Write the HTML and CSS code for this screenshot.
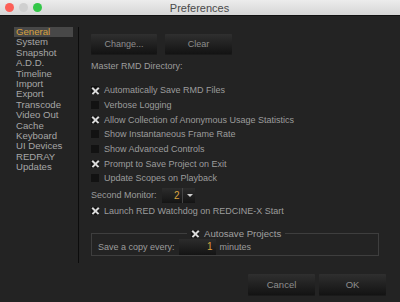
FILE: index.html
```html
<!DOCTYPE html>
<html lang="en">
<head>
  <meta charset="UTF-8" />
  <title>Preferences</title>
  <link rel="stylesheet" href="styles.css">
</head>
<body>
  <div class="titlebar">
    <div class="lights">
      <span class="light red"></span>
      <span class="light gray"></span>
      <span class="light green"></span>
    </div>
    <div class="title">Preferences</div>
  </div>

  <div class="window">
    <ul class="sidebar">
      <li class="active">General</li>
      <li>System</li>
      <li>Snapshot</li>
      <li>A.D.D.</li>
      <li>Timeline</li>
      <li>Import</li>
      <li>Export</li>
      <li>Transcode</li>
      <li>Video Out</li>
      <li>Cache</li>
      <li>Keyboard</li>
      <li>UI Devices</li>
      <li>REDRAY</li>
      <li>Updates</li>
    </ul>

    <div class="panel">
      <div class="btn-row">
        <button class="btn">Change...</button>
        <button class="btn">Clear</button>
      </div>
      <div class="label">Master RMD Directory:</div>

      <div class="checks">
        <div class="check on"><span class="box"></span>Automatically Save RMD Files</div>
        <div class="check"><span class="box"></span>Verbose Logging</div>
        <div class="check on"><span class="box"></span>Allow Collection of Anonymous Usage Statistics</div>
        <div class="check"><span class="box"></span>Show Instantaneous Frame Rate</div>
        <div class="check"><span class="box"></span>Show Advanced Controls</div>
        <div class="check on"><span class="box"></span>Prompt to Save Project on Exit</div>
        <div class="check"><span class="box"></span>Update Scopes on Playback</div>
      </div>

      <div class="monitor-row">
        <span>Second Monitor:</span>
        <div class="dropdown">
          <span class="value">2</span>
          <span class="arrow"></span>
        </div>
      </div>

      <div class="check on"><span class="box"></span>Launch RED Watchdog on REDCINE-X Start</div>

      <fieldset class="group">
        <legend class="check on"><span class="box"></span>Autosave Projects</legend>
        <div class="copy-row">
          <span>Save a copy every:</span>
          <div class="field">1</div>
          <span>minutes</span>
        </div>
      </fieldset>
    </div>
  </div>

  <div class="footer">
    <button class="btn big">Cancel</button>
    <button class="btn big">OK</button>
  </div>
</body>
</html>
```

FILE: styles.css
```css
body {
  margin: 0;
  width: 400px;
  height: 302px;
  overflow: hidden;
  background: #232323;
  font-family: "Liberation Sans", Arial, sans-serif;
  font-size: 9px;
  color: #9c9c9c;
}

/* Barra de titulo */
.titlebar {
  height: 16px;
  display: flex;
  align-items: center;
  position: relative;
  background: linear-gradient(#ececec, #d6d6d6);
  border-bottom: 1px solid #111;
  box-sizing: border-box;
}

.lights {
  display: flex;
  gap: 5px;
  padding-left: 5px;
}

.light {
  width: 9px;
  height: 9px;
  border-radius: 50%;
}

.red { background: #fc5f57; }
.gray { background: #cfcfcf; }
.green { background: #33c748; }

.title {
  flex: 1;
  text-align: center;
  margin-right: 43px;
  font-size: 11px;
  color: #4a4a4a;
}

.window {
  display: flex;
}

/* Lista lateral */
.sidebar {
  list-style: none;
  margin: 11px 0 0 14px;
  padding: 0 5px 0 0;
  width: 59px;
  height: 236px;
  border-right: 1px solid #0c0c0c;
  font-size: 9.6px;
  line-height: 10.4px;
}

.sidebar li {
  padding-left: 2px;
  color: #a6a6a6;
}

.sidebar li.active {
  background: #484848;
  color: #d9a23e;
}

.panel {
  padding: 18px 0 0 12px;
  flex: 1;
}

.btn-row {
  display: flex;
  gap: 8px;
}

.btn {
  font-family: "Liberation Sans", Arial, sans-serif;
  font-size: 9px;
  color: #8e8e8e;
  width: 66px;
  height: 20px;
  border: none;
  border-radius: 1px;
  background: linear-gradient(#2f2f2f, #131313);
  box-shadow: 0 1px 0 #1a1a1a;
  padding: 0;
}

.btn-row .btn + .btn {
  width: 67px;
}

.label {
  margin-top: 7px;
  line-height: 10px;
}

.checks {
  margin-top: 12px;
}

.check {
  display: flex;
  align-items: center;
  height: 14.7px;
  gap: 5px;
}

.box {
  width: 8px;
  height: 8px;
  background: #121212;
  position: relative;
}

.check.on .box::before,
.check.on .box::after {
  content: "";
  position: absolute;
  left: -0.5px;
  top: 3.2px;
  width: 9px;
  height: 1.7px;
  background: #dadada;
  transform: rotate(45deg);
}

.check.on .box::after {
  transform: rotate(-45deg);
}

.monitor-row {
  display: flex;
  align-items: center;
  gap: 5px;
  height: 17px;
  margin-top: 1px;
}

.dropdown {
  display: flex;
  width: 33px;
  height: 15px;
  background: linear-gradient(#2c2c2c, #141414);
}

.dropdown .value {
  width: 18px;
  text-align: right;
  padding-right: 2px;
  line-height: 15px;
  color: #d9a23e;
  font-size: 10px;
  border-right: 1px solid #444;
}

.dropdown .arrow {
  flex: 1;
  position: relative;
}

.dropdown .arrow::after {
  content: "";
  position: absolute;
  left: 4px;
  top: 6px;
  border-left: 3px solid transparent;
  border-right: 3px solid transparent;
  border-top: 3px solid #d0d0d0;
}

.group {
  margin: 9px 0 0 0;
  width: 288px;
  height: 28px;
  box-sizing: border-box;
  border: 1px solid #3e3e3e;
  padding: 0 0 0 6px;
}

.group legend {
  margin-left: 89px;
  padding: 0 4px;
  font-size: 9.6px;
  height: 12px;
  color: #a0a0a0;
}

.copy-row {
  display: flex;
  align-items: center;
  gap: 4px;
  margin-top: -1px;
}

.field {
  width: 34px;
  height: 16px;
  line-height: 16px;
  padding-right: 3px;
  text-align: right;
  font-size: 10px;
  color: #d9a23e;
  background: linear-gradient(#2c2c2c, #141414);
}

/* Botones de abajo */
.footer {
  display: flex;
  justify-content: flex-end;
  gap: 4px;
  padding: 11px 14px 0 0;
}

.btn.big {
  width: 67px;
  height: 21px;
  font-size: 9.5px;
}
```
